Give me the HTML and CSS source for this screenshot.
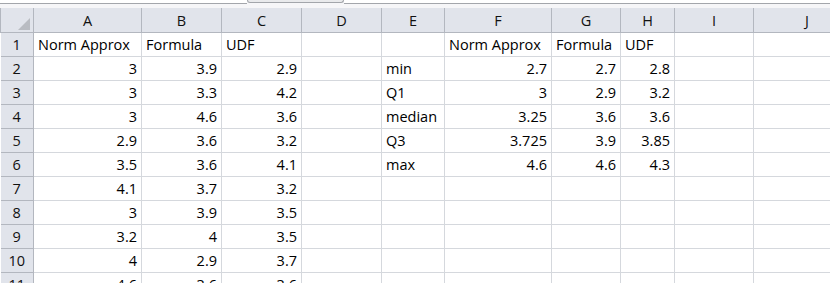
FILE: index.html
```html
<!DOCTYPE html>
<html lang="en">
<head>
  <meta charset="UTF-8" />
  <title>Sheet1</title>
  <link rel="stylesheet" href="styles.css">
</head>
<body>
  <div class="formula-edge">
    <div class="edge-left"></div>
    <div class="edge-tab"></div>
    <div class="edge-right"></div>
  </div>
  <table class="sheet">
    <colgroup>
      <col class="w-rh"><col class="w-a"><col class="w-b"><col class="w-c"><col class="w-d">
      <col class="w-e"><col class="w-f"><col class="w-g"><col class="w-h"><col class="w-i"><col class="w-j">
    </colgroup>
    <thead>
      <tr>
        <th class="corner"><svg width="12" height="12" viewBox="0 0 12 12"><polygon points="12,0 12,12 0,12" fill="#b9bcc2"/></svg></th>
        <th>A</th><th>B</th><th>C</th><th>D</th><th>E</th><th>F</th><th>G</th><th>H</th><th>I</th><th>J</th>
      </tr>
    </thead>
    <tbody>
      <tr><th>1</th><td>Norm Approx</td><td>Formula</td><td>UDF</td><td></td><td></td><td>Norm Approx</td><td>Formula</td><td>UDF</td><td></td><td></td></tr>
      <tr><th>2</th><td class="n">3</td><td class="n">3.9</td><td class="n">2.9</td><td></td><td>min</td><td class="n">2.7</td><td class="n">2.7</td><td class="n">2.8</td><td></td><td></td></tr>
      <tr><th>3</th><td class="n">3</td><td class="n">3.3</td><td class="n">4.2</td><td></td><td>Q1</td><td class="n">3</td><td class="n">2.9</td><td class="n">3.2</td><td></td><td></td></tr>
      <tr><th>4</th><td class="n">3</td><td class="n">4.6</td><td class="n">3.6</td><td></td><td>median</td><td class="n">3.25</td><td class="n">3.6</td><td class="n">3.6</td><td></td><td></td></tr>
      <tr><th>5</th><td class="n">2.9</td><td class="n">3.6</td><td class="n">3.2</td><td></td><td>Q3</td><td class="n">3.725</td><td class="n">3.9</td><td class="n">3.85</td><td></td><td></td></tr>
      <tr><th>6</th><td class="n">3.5</td><td class="n">3.6</td><td class="n">4.1</td><td></td><td>max</td><td class="n">4.6</td><td class="n">4.6</td><td class="n">4.3</td><td></td><td></td></tr>
      <tr><th>7</th><td class="n">4.1</td><td class="n">3.7</td><td class="n">3.2</td><td></td><td></td><td></td><td></td><td></td><td></td><td></td></tr>
      <tr><th>8</th><td class="n">3</td><td class="n">3.9</td><td class="n">3.5</td><td></td><td></td><td></td><td></td><td></td><td></td><td></td></tr>
      <tr><th>9</th><td class="n">3.2</td><td class="n">4</td><td class="n">3.5</td><td></td><td></td><td></td><td></td><td></td><td></td><td></td></tr>
      <tr><th>10</th><td class="n">4</td><td class="n">2.9</td><td class="n">3.7</td><td></td><td></td><td></td><td></td><td></td><td></td><td></td></tr>
      <tr><th>11</th><td class="n">4.6</td><td class="n">3.6</td><td class="n">3.6</td><td></td><td></td><td></td><td></td><td></td><td></td><td></td></tr>
    </tbody>
  </table>
</body>
</html>
```

FILE: styles.css
```css
body {
  margin: 0;
  background: #fff;
  font-family: 'Open Sans', Lato, sans-serif;
  font-size: 14.5px;
  color: #000;
  overflow: hidden;
}
.formula-edge {
  display: flex;
  height: 8px;
  background: #f6f6f8;
}
.edge-left {
  width: 247px;
  height: 3px;
  background: #fff;
  border-bottom: 1px solid #a3a6ab;
}
.edge-tab {
  width: 95px;
  height: 2px;
  background: #e9eaec;
  border: 1px solid #a3a6ab;
  border-top: none;
  border-radius: 0 0 3px 3px;
}
.edge-right {
  flex: 1;
  height: 3px;
  background: #fff;
  border-bottom: 1px solid #a3a6ab;
}
.sheet {
  border-collapse: collapse;
  table-layout: fixed;
  width: 860px;
}
.w-rh { width: 33px; }
.w-a { width: 108px; }
.w-b { width: 80px; }
.w-c { width: 80px; }
.w-d { width: 80px; }
.w-e { width: 63px; }
.w-f { width: 107px; }
.w-g { width: 69px; }
.w-h { width: 54px; }
.w-i { width: 79px; }
.w-j { width: 107px; }
th {
  background: #e1e4eb;
  border: 1px solid #b3b7bf;
  font-weight: normal;
  color: #111;
  text-align: center;
  padding: 0;
}
thead th {
  height: 22px;
  border-top: none;
}
.corner {
  text-align: right;
  vertical-align: bottom;
  line-height: 0;
  padding: 0 3px 2px 0;
}
tbody th {
  border-left: none;
}
td {
  height: 23px;
  padding: 0 4px;
  border: 1px solid #d5d8dd;
  white-space: nowrap;
  overflow: hidden;
  line-height: 23px;
}
td.n {
  text-align: right;
}
```
